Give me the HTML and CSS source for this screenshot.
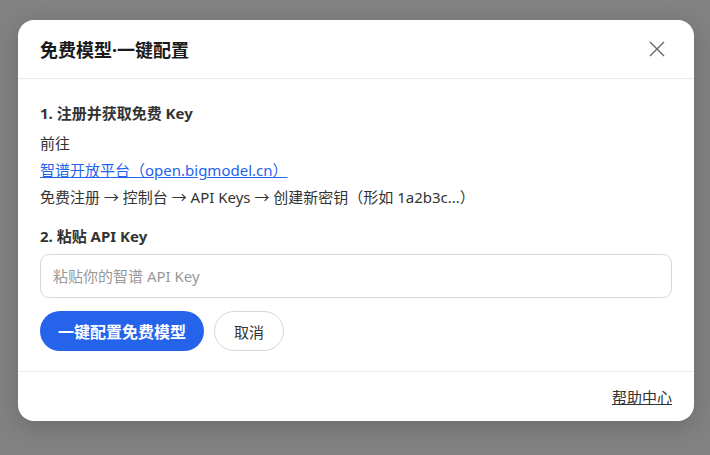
FILE: index.html
```
<!DOCTYPE html>
<html>
	<head>
		<meta charset="UTF-8">
		<title>免费模型·一键配置</title>
		<link rel="stylesheet" href="styles.css">
	</head>
	<body>
		<div class="mask">
			<div class="dialog">
				<div class="dialog_hd">
					<h2 class="title">免费模型·一键配置</h2>
					<a class="close" href="#">
						<svg width="16" height="16" viewBox="0 0 16 16"><path d="M1 1L15 15M15 1L1 15" stroke="#666" stroke-width="1.4" fill="none"/></svg>
					</a>
				</div>
				<div class="dialog_bd">
					<h3 class="step">1. 注册并获取免费 Key</h3>
					<p class="line">前往</p>
					<p class="line"><a class="link" href="#">智谱开放平台（open.bigmodel.cn）</a></p>
					<p class="line">免费注册 → 控制台 → API Keys → 创建新密钥（形如 1a2b3c...）</p>
					<h3 class="step step2">2. 粘贴 API Key</h3>
					<input class="ipt" type="text" placeholder="粘贴你的智谱 API Key">
					<div class="btns">
						<button class="btn btn_primary">一键配置免费模型</button>
						<button class="btn btn_default">取消</button>
					</div>
				</div>
				<div class="dialog_ft">
					<a class="help" href="#">帮助中心</a>
				</div>
			</div>
		</div>
	</body>
</html>
```

FILE: styles.css
```
body{margin: 0; background: #828282; font-family: "Noto Sans", "Noto Sans CJK SC", sans-serif; color: #333;}
h2,h3,p{margin: 0;}
.mask{height: 455px; padding-top: 20px; box-sizing: border-box;}
.dialog{width: 676px; margin-left: 18px; background: #fff; border-radius: 16px; box-shadow: 0 6px 24px rgba(0,0,0,0.18);}
.dialog_hd{height: 58px; padding: 0 22px; display: flex; align-items: center; justify-content: space-between; border-bottom: 1px solid #ececec;}
.title{font-size: 18px; font-weight: bold; color: #1a1a1a;}
.close{display: flex; width: 16px; height: 16px; margin-right: 7px;}
.dialog_bd{padding: 22px 22px 20px;}
.step{font-size: 15px; font-weight: bold; line-height: 24px; color: #333; margin-bottom: 5px;}
.step2{margin-top: 13px; margin-bottom: 6px;}
.line{font-size: 15px; line-height: 27px; color: #333;}
.link{color: #2563eb; text-decoration: underline;}
.ipt{display: block; width: 100%; height: 44px; box-sizing: border-box; padding: 0 12px; border: 1px solid #d6d6de; border-radius: 9px; font: 15px "Noto Sans", "Noto Sans CJK SC", sans-serif; color: #333; outline: none;}
.ipt::placeholder{color: #999;}
.btns{display: flex; gap: 10px; margin-top: 13px;}
.btn{height: 40px; border-radius: 20px; font-family: "Noto Sans", "Noto Sans CJK SC", sans-serif; cursor: pointer;}
.btn_primary{padding: 0 18px; background: #2563eb; border: none; color: #fff; font-size: 16px; font-weight: bold;}
.btn_default{padding: 0 19px; background: #fff; border: 1px solid #d6d6de; color: #333; font-size: 15px;}
.dialog_ft{height: 49px; padding: 0 22px; border-top: 1px solid #ececec; display: flex; align-items: center; justify-content: flex-end;}
.help{font-size: 15px; color: #333; text-decoration: underline;}
```
